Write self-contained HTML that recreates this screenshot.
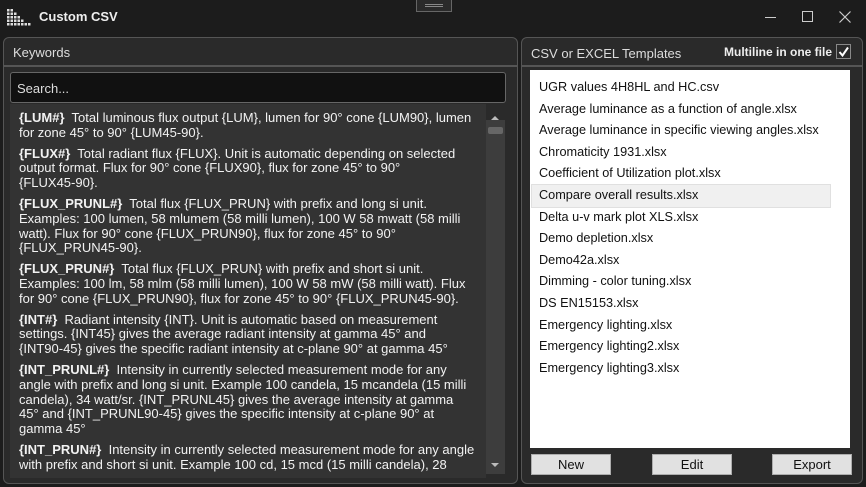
<!DOCTYPE html>
<html><head><meta charset="utf-8"><style>
*{margin:0;padding:0;box-sizing:border-box}
body{width:866px;height:487px;background:#1c1c1c;font-family:"Liberation Sans",sans-serif;position:relative;overflow:hidden;color:#eee}
.abs{position:absolute}
.panel{position:absolute;background:#2a2a2a;border:1px solid #555;border-radius:6px}
.hdr{position:absolute;left:0;right:0;top:0;height:29px;border-bottom:2px solid #555;font-size:13px;color:#ddd}
#txt{left:10px;top:104px;width:476px;height:374px;background:#333;overflow:hidden;padding:7px 0 0 9px;font-size:13px;line-height:14.8px;color:#f2f2f2;white-space:nowrap}
#txt p{margin-bottom:6px}
#txt b{font-weight:bold}
.list{left:530px;top:70px;width:320px;height:378px;background:#fff;color:#111;font-size:12.7px;padding-top:7px}
.list div{height:21.6px;line-height:21.6px;padding-left:7px;margin:0 20px 0 2px}
.btn{position:absolute;top:454px;width:80px;height:21px;background:#e1e1e1;border:1px solid #adadad;color:#111;font-size:13px;text-align:center;line-height:20px}
</style></head><body>
<svg class="abs" style="left:7px;top:9px" width="24" height="17" viewBox="0 0 24 17" fill="#ddd">
<rect x="0" y="0" width="2.5" height="2.5"/><rect x="3.5" y="0" width="2.5" height="2.5"/>
<rect x="0" y="3.5" width="2.5" height="2.5"/><rect x="3.5" y="3.5" width="2.5" height="2.5"/><rect x="7" y="3.5" width="2.5" height="2.5"/>
<rect x="0" y="7" width="2.5" height="2.5"/><rect x="3.5" y="7" width="2.5" height="2.5"/><rect x="7" y="7" width="2.5" height="2.5"/><rect x="10.5" y="7" width="2.5" height="2.5"/>
<rect x="0" y="10.5" width="2.5" height="2.5"/><rect x="3.5" y="10.5" width="2.5" height="2.5"/><rect x="7" y="10.5" width="2.5" height="2.5"/><rect x="10.5" y="10.5" width="2.5" height="2.5"/><rect x="14" y="10.5" width="2.5" height="2.5"/>
<rect x="0" y="14" width="2.5" height="2.5"/><rect x="3.5" y="14" width="2.5" height="2.5"/><rect x="7" y="14" width="2.5" height="2.5"/><rect x="10.5" y="14" width="2.5" height="2.5"/><rect x="14" y="14" width="2.5" height="2.5"/><rect x="17.5" y="14" width="2.5" height="2.5"/><rect x="21" y="14" width="2.5" height="2.5"/>
</svg>
<div class="abs" style="left:39px;top:9px;font-size:13px;font-weight:bold;color:#eee">Custom CSV</div>
<div class="abs" style="left:416px;top:0;width:36px;height:12px;border:1px solid #666;border-top:none;background:#2a2a2a"><div style="margin:4px 8px 0;height:3px;border-top:1px solid #888;border-bottom:1px solid #888"></div></div>
<div class="abs" style="left:765px;top:17px;width:11px;height:1px;background:#ccc"></div>
<div class="abs" style="left:802px;top:11px;width:11px;height:11px;border:1px solid #ccc"></div>
<svg class="abs" style="left:839px;top:11px" width="12" height="12"><path d="M0.5 0.5L11.5 11.5M11.5 0.5L0.5 11.5" stroke="#ccc" stroke-width="1.2"/></svg>

<div class="panel" style="left:3px;top:37px;width:515px;height:447px">
<div class="hdr"><span style="position:absolute;left:9px;top:7px">Keywords</span></div>
</div>
<div class="abs" style="left:10px;top:72px;width:496px;height:31px;background:#111;border:1px solid #666;border-radius:3px;font-size:13px;color:#ddd;padding:8px 0 0 6px">Search...</div>
<div id="txt" class="abs">
<p><b>{LUM#}</b>&nbsp; Total luminous flux output {LUM}, lumen for 90° cone {LUM90}, lumen<br>for zone 45° to 90° {LUM45-90}.</p>
<p><b>{FLUX#}</b>&nbsp; Total radiant flux {FLUX}. Unit is automatic depending on selected<br>output format. Flux for 90° cone {FLUX90}, flux for zone 45° to 90°<br>{FLUX45-90}.</p>
<p><b>{FLUX_PRUNL#}</b>&nbsp; Total flux {FLUX_PRUN} with prefix and long si unit.<br>Examples: 100 lumen, 58 mlumem (58 milli lumen), 100 W 58 mwatt (58 milli<br>watt). Flux for 90° cone {FLUX_PRUN90}, flux for zone 45° to 90°<br>{FLUX_PRUN45-90}.</p>
<p><b>{FLUX_PRUN#}</b>&nbsp; Total flux {FLUX_PRUN} with prefix and short si unit.<br>Examples: 100 lm, 58 mlm (58 milli lumen), 100 W 58 mW (58 milli watt). Flux<br>for 90° cone {FLUX_PRUN90}, flux for zone 45° to 90° {FLUX_PRUN45-90}.</p>
<p><b>{INT#}</b>&nbsp; Radiant intensity {INT}. Unit is automatic based on measurement<br>settings. {INT45} gives the average radiant intensity at gamma 45° and<br>{INT90-45} gives the specific radiant intensity at c-plane 90° at gamma 45°</p>
<p><b>{INT_PRUNL#}</b>&nbsp; Intensity in currently selected measurement mode for any<br>angle with prefix and long si unit. Example 100 candela, 15 mcandela (15 milli<br>candela), 34 watt/sr. {INT_PRUNL45} gives the average intensity at gamma<br>45° and {INT_PRUNL90-45} gives the specific intensity at c-plane 90° at<br>gamma 45°</p>
<p><b>{INT_PRUN#}</b>&nbsp; Intensity in currently selected measurement mode for any angle<br>with prefix and short si unit. Example 100 cd, 15 mcd (15 milli candela), 28</p>
</div>
<div class="abs" style="left:486px;top:120px;width:19px;height:354px;background:#3d3d3d"></div>
<svg class="abs" style="left:490px;top:115px" width="10" height="6"><path d="M1 5L5 1L9 5Z" fill="#bbb"/></svg>
<div class="abs" style="left:488px;top:127px;width:15px;height:7px;background:#666;border-radius:2px"></div>
<svg class="abs" style="left:490px;top:462px" width="10" height="6"><path d="M1 1L5 5L9 1Z" fill="#bbb"/></svg>

<div class="panel" style="left:521px;top:37px;width:342px;height:447px">
<div class="hdr"><span style="position:absolute;left:9px;top:8px">CSV or EXCEL Templates</span>
<span style="position:absolute;left:202px;top:7px;font-weight:bold;color:#eee;font-size:12px">Multiline in one file</span>
<div style="position:absolute;left:314px;top:6px;width:15px;height:15px;border:1px solid #888;background:#2a2a2a"><svg width="13" height="13"><path d="M2.5 7L5.5 10.5L11 2.5" stroke="#fff" stroke-width="2" fill="none"/></svg></div>
</div>
</div>
<div class="list abs">
<div>UGR values 4H8HL and HC.csv</div>
<div>Average luminance as a function of angle.xlsx</div>
<div>Average luminance in specific viewing angles.xlsx</div>
<div>Chromaticity 1931.xlsx</div>
<div>Coefficient of Utilization plot.xlsx</div>
<div style="background:#f0f0f0;outline:1px solid #e0e0e0">Compare overall results.xlsx</div>
<div>Delta u-v mark plot XLS.xlsx</div>
<div>Demo depletion.xlsx</div>
<div>Demo42a.xlsx</div>
<div>Dimming - color tuning.xlsx</div>
<div>DS EN15153.xlsx</div>
<div>Emergency lighting.xlsx</div>
<div>Emergency lighting2.xlsx</div>
<div>Emergency lighting3.xlsx</div>
</div>
<div class="btn" style="left:531px">New</div>
<div class="btn" style="left:652px">Edit</div>
<div class="btn" style="left:772px">Export</div>
</body></html>
